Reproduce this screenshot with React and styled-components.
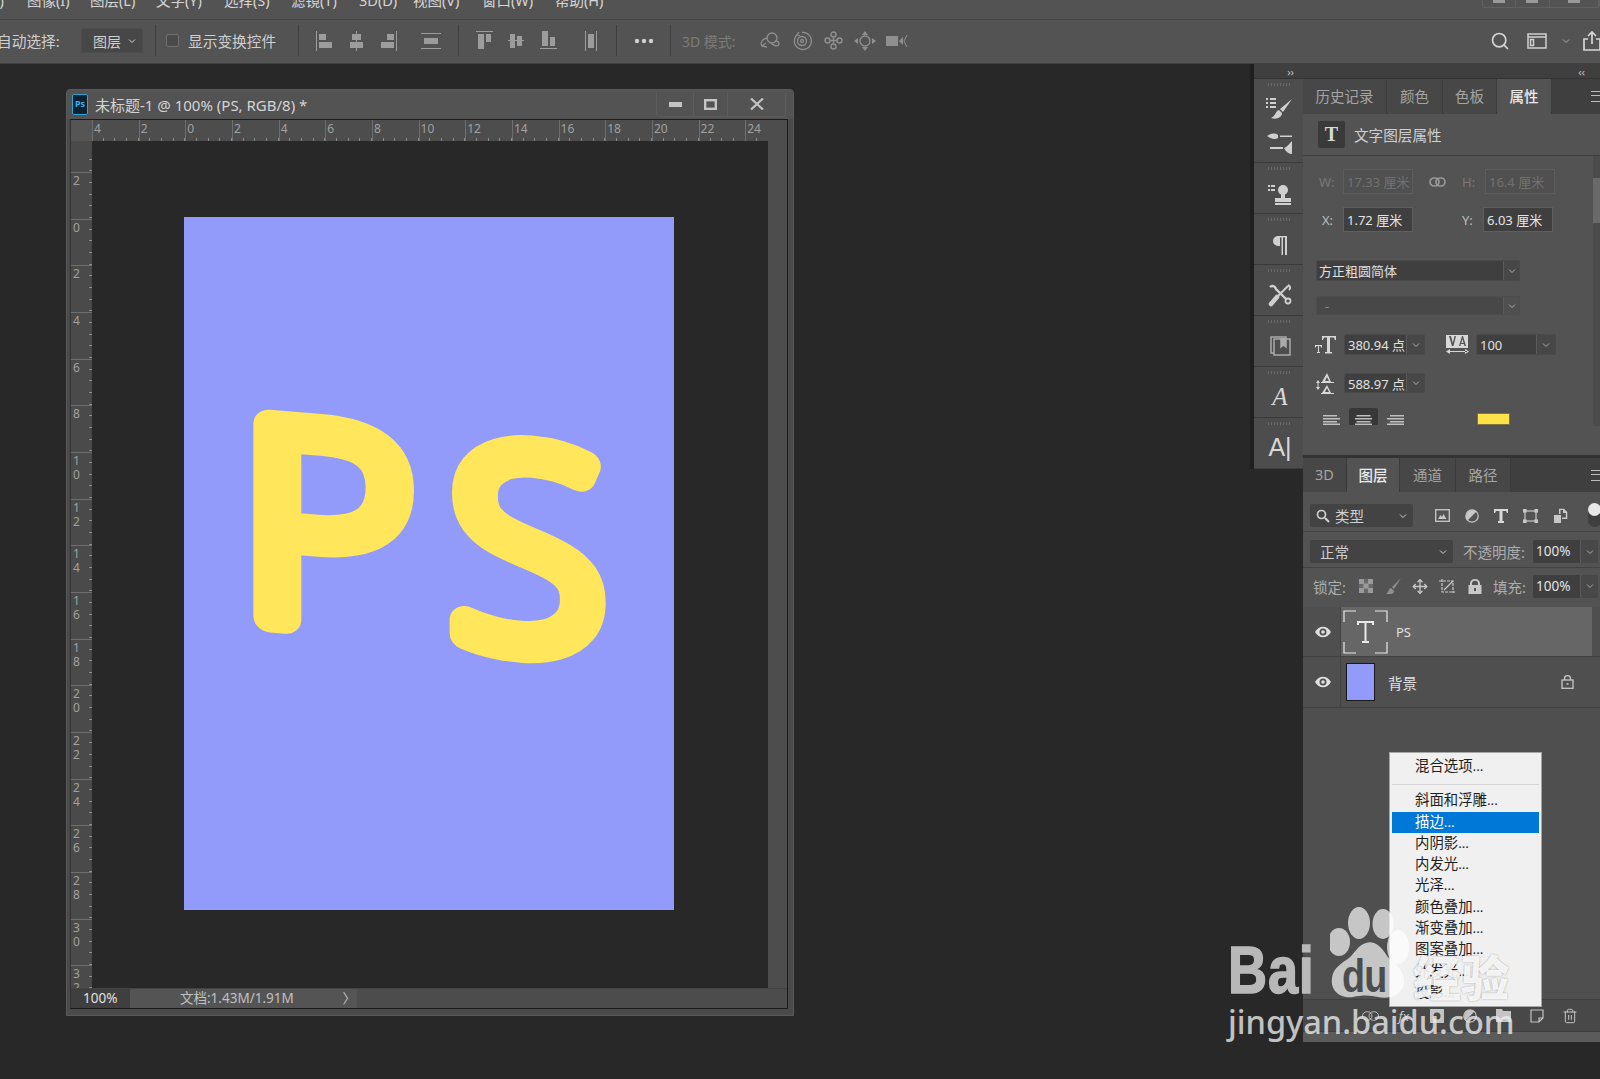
import React from 'react';
import styled, { createGlobalStyle } from 'styled-components';
import { Search, Trash2, Move } from 'lucide-react';

const FONT = '"Noto Sans", "Noto Sans CJK SC", sans-serif';

const GlobalStyle = createGlobalStyle`
  html, body { margin: 0; padding: 0; background: #282828; }
  body { font-family: ${FONT}; overflow: hidden; }
  #root { width: 1600px; height: 1079px; }
`;

const Page = styled.div`
  position: relative;
  width: 1600px;
  height: 1079px;
  overflow: hidden;
  display: flex;
  flex-direction: column;
  background: #282828;
  color: #c8c8c8;
  font-size: 14px;
`;

/* ---------- top bars ---------- */
const MenuBar = styled.div`
  height: 19px;
  flex: none;
  display: flex;
  overflow: hidden;
  background: #535353;
  border-bottom: 1px solid #434343;
  box-sizing: content-box;
`;
const MenuItem = styled.span`
  flex: none;
  margin-left: ${(p) => p.$ml}px;
  width: ${(p) => p.$w}px;
  margin-top: -10px;
  line-height: 20px;
  font-size: 14.5px;
  white-space: nowrap;
  color: #d6d6d6;
`;
const WinButtons = styled.div`
  margin-left: auto;
  display: flex;
  height: 7px;
  width: 116px;
  border: 1px solid #606060;
  border-top: 0;
  border-radius: 0 0 3px 3px;
`;
const WinButton = styled.div`
  flex: ${(p) => p.$flex || 1};
  border-right: 1px solid #606060;
  display: flex;
  justify-content: center;
  &::before { content: ''; width: 12px; height: 3px; background: #999; }
`;

const OptionsBar = styled.div`
  height: 44px;
  box-sizing: border-box;
  padding-bottom: 2px;
  flex: none;
  display: flex;
  align-items: center;
  background: #535353;
  border-bottom: 1px solid #3e3e3e;
`;
const OptLabel = styled.span`
  flex: none;
  margin-left: ${(p) => p.$ml || 0}px;
  width: ${(p) => p.$w}px;
  font-size: ${(p) => (p.$dim ? 14 : 14.7)}px;
  white-space: nowrap;
  color: ${(p) => (p.$dim ? '#7b7b7b' : '#cfcfcf')};
`;
const Drop = styled.div`
  flex: none;
  margin-left: ${(p) => p.$ml}px;
  width: ${(p) => p.$w}px;
  height: 25px;
  box-sizing: border-box;
  display: flex;
  align-items: center;
  justify-content: space-between;
  padding: 0 6px 0 11px;
  background: #474747;
  border: 1px solid #4d4d4d;
  border-radius: 2px;
  color: #cfcfcf;
`;
const Sep = styled.div`
  flex: none;
  margin-left: ${(p) => p.$ml}px;
  width: 1px;
  height: 31px;
  background: #3f3f3f;
`;
const Check = styled.div`
  flex: none;
  margin-left: ${(p) => p.$ml}px;
  width: 13px;
  height: 13px;
  box-sizing: border-box;
  background: #4a4a4a;
  border: 1px solid #6f6f6f;
  border-radius: 2px;
`;
const ToolIcon = styled.div`
  flex: none;
  margin-left: ${(p) => p.$ml}px;
  display: flex;
  color: ${(p) => p.$color || '#9c9c9c'};
`;

/* ---------- workspace ---------- */
const Workspace = styled.div`
  flex: 1;
  position: relative;
  display: flex;
  align-items: flex-start;
  background: #282828;
`;

const DocWindow = styled.div`
  margin: 25px 0 0 66px;
  width: 728px;
  height: 927px;
  box-sizing: border-box;
  background: #4a4a4a;
  border: 1px solid #5a5a5a;
  border-radius: 4px 4px 0 0;
  display: flex;
  flex-direction: column;
  padding: 0 5px 6px 3px;
`;
const TitleBar = styled.div`
  height: 29px;
  flex: none;
  display: flex;
  align-items: center;
  margin: 0 -5px 0 -3px;
  padding-left: 5px;
  background: #535353;
  color: #d4d4d4;
`;
const TitleText = styled.span`
  margin-left: 7px;
  font-size: 15px;
  white-space: nowrap;
`;
const PsBadge = styled.div`
  width: 16px;
  height: 21px;
  box-sizing: border-box;
  background: #0b2233;
  border: 1.5px solid #2fa3d6;
  border-radius: 2px;
  color: #3fb0e6;
  font-size: 9px;
  font-weight: 700;
  line-height: 18px;
  text-align: center;
`;
const WinControls = styled.div`
  margin-left: auto;
  margin-right: 7px;
  height: 24px;
  display: flex;
  border: 1px solid #5c5c5c;
  border-top: 0;
  border-radius: 0 0 3px 3px;
`;
const WinControl = styled.div`
  width: ${(p) => p.$w}px;
  display: flex;
  align-items: center;
  justify-content: center;
  border-left: ${(p) => (p.$first ? '0' : '1px solid #5c5c5c')};
  color: #c4c4c4;
`;
const DocInner = styled.div`
  flex: 1;
  display: flex;
  flex-direction: column;
  border: 1px solid #1c1c1c;
  border-left-color: #333;
  min-height: 0;
`;
const RulerTop = styled.div`
  height: 21px;
  flex: none;
  display: flex;
  background: #4d4d4d;
`;
const Corner = styled.div`
  width: 21px;
  flex: none;
  background: #555;
`;
const HTicks = styled.div`
  width: 676px;
  flex: none;
  display: flex;
  overflow: hidden;
  background-image: repeating-linear-gradient(90deg, transparent 0 10.67px, #8a8a8a 10.67px 11.67px);
  background-size: 100% 3px;
  background-repeat: no-repeat;
  background-position: 0 100%;
`;
const HCell = styled.div`
  flex: none;
  width: 46.67px;
  box-sizing: border-box;
  border-left: 1px solid #6e6e6e;
  padding-left: 1px;
  font-size: 12px;
  line-height: 18px;
  color: #a0a0a0;
`;
const ScrollStrip = styled.div`
  flex: 1;
  background: #4d4d4d;
`;
const MiddleRow = styled.div`
  flex: 1;
  display: flex;
  min-height: 0;
`;
const RulerLeft = styled.div`
  width: 21px;
  flex: none;
  overflow: hidden;
  background-color: #4a4a4a;
  background-image: repeating-linear-gradient(180deg, transparent 0 10.67px, #8a8a8a 10.67px 11.67px);
  background-size: 3px 100%;
  background-repeat: no-repeat;
  background-position: 100% 7px;
`;
const VLead = styled.div`
  height: 31px;
`;
const VCell = styled.div`
  height: 46.67px;
  box-sizing: border-box;
  border-top: 1px solid #6e6e6e;
  padding: 1px 0 0 2px;
  font-size: 12px;
  line-height: 14px;
  color: #a0a0a0;
  display: flex;
  flex-direction: column;
`;
const CanvasArea = styled.div`
  width: 676px;
  flex: none;
  background: #282828;
  overflow: hidden;
`;
const Artboard = styled.div`
  position: relative;
  margin: 76px 0 0 92px;
  width: 490px;
  height: 693px;
  background: #929bfa;
`;
const ArtText = styled.svg`
  position: absolute;
  inset: 0;
  width: 490px;
  height: 693px;
  overflow: visible;
`;
const SideStrip = styled.div`
  flex: 1;
  background: #4d4d4d;
`;
const StatusBar = styled.div`
  height: 19px;
  flex: none;
  display: flex;
  background: #4c4c4c;
  border-top: 1px solid #444;
  line-height: 18px;
`;
const Zoom = styled.div`
  width: 59px;
  box-sizing: border-box;
  padding-left: 12px;
  background: #3f3f3f;
  color: #e0e0e0;
  font-size: 13.5px;
`;
const DocInfo = styled.div`
  width: 227px;
  box-sizing: border-box;
  padding: 0 1px 0 50px;
  display: flex;
  justify-content: space-between;
  background: #545454;
  color: #c0c0c0;
  font-size: 13.5px;
`;

/* ---------- right side ---------- */
const DockColumn = styled.div`
  margin-left: auto;
  width: 49px;
  flex: none;
  box-shadow: -4px 0 0 #1f1f1f;
  background: #4d4d4d;
`;
const Strip = styled.div`
  height: 15px;
  box-sizing: border-box;
  display: flex;
  align-items: center;
  justify-content: ${(p) => p.$justify || 'flex-end'};
  padding: 0 ${(p) => p.$pad || 8}px;
  background: #3f3f3f;
  border-bottom: 1px solid #333;
  color: #c0c0c0;
  font-size: 11px;
  line-height: 1;
`;
const DockCell = styled.div`
  height: ${(p) => p.$h || 51}px;
  box-sizing: border-box;
  display: flex;
  flex-direction: column;
  align-items: center;
  border-bottom: 1px solid #3b3b3b;
  color: #d0d0d0;
  padding: 4px 0 0 3px;
  gap: ${(p) => p.$gap || 0}px;
  &::before {
    content: '';
    width: 24px;
    height: 3px;
    flex: none;
    margin-bottom: ${(p) => p.$top || 6}px;
    background: repeating-linear-gradient(90deg, #6a6a6a 0 1px, transparent 1px 3px);
  }
`;
const DockLetter = styled.span`
  font-size: 25px;
  line-height: 30px;
  color: #d8d8d8;
  font-family: ${(p) => (p.$serif ? '"Liberation Serif", serif' : '"Liberation Sans", sans-serif')};
  font-style: ${(p) => (p.$serif ? 'italic' : 'normal')};
`;

const PanelColumn = styled.div`
  position: relative;
  width: 297px;
  flex: none;
  height: 978px;
  background: #535353;
  display: flex;
  flex-direction: column;
`;
const Tabs = styled.div`
  height: ${(p) => p.$h}px;
  flex: none;
  display: flex;
  align-items: stretch;
  background: #3f3f3f;
  position: relative;
`;
const Tab = styled.div`
  width: ${(p) => p.$w}px;
  flex: none;
  box-sizing: border-box;
  display: flex;
  align-items: center;
  justify-content: center;
  padding-bottom: 2px;
  font-size: 14.5px;
  background: ${(p) => (p.$active ? '#535353' : '#474747')};
  color: ${(p) => (p.$active ? '#eaeaea' : '#a4a4a4')};
  font-weight: ${(p) => (p.$active ? 500 : 400)};
  border-right: 1px solid #3b3b3b;
`;
const PanelMenu = styled.div`
  margin-left: auto;
  width: 9px;
  height: 9px;
  align-self: center;
  border-top: 1px solid #bbb;
  border-bottom: 1px solid #bbb;
  position: relative;
  &::after {
    content: '';
    position: absolute;
    left: 0;
    right: 0;
    top: 3px;
    height: 1px;
    background: #bbb;
  }
`;
const PropsHeader = styled.div`
  height: 42px;
  flex: none;
  box-sizing: border-box;
  display: flex;
  align-items: center;
  padding-left: 15px;
  border-bottom: 1px solid #3f3f3f;
  color: #cfcfcf;
  font-size: 14.6px;
`;
const TypeBox = styled.div`
  width: 27px;
  height: 27px;
  margin-right: 9px;
  background: #3a3a3a;
  border-radius: 2px;
  color: #d8d8d8;
  font: 700 20px/26px "Liberation Serif", serif;
  text-align: center;
`;
const PropsBody = styled.div`
  flex: none;
  height: 299px;
  display: flex;
  border-bottom: 3px solid #333;
`;
const PropsContent = styled.div`
  flex: 1;
  display: flex;
  flex-direction: column;
  padding-left: 13px;
`;
const ScrollTrack = styled.div`
  width: 7px;
  height: 270px;
  flex: none;
  background: #4c4c4c;
  padding-top: 22px;
  box-sizing: border-box;
  &::before {
    content: '';
    display: block;
    height: 45px;
    background: #6a6a6a;
  }
`;
const PropRow = styled.div`
  flex: none;
  display: flex;
  align-items: center;
  margin-top: ${(p) => p.$mt}px;
  height: ${(p) => p.$h}px;
`;
const FieldLabel = styled.span`
  flex: none;
  width: ${(p) => p.$w}px;
  margin-left: ${(p) => p.$ml || 0}px;
  color: ${(p) => (p.$dim ? '#777' : '#bdbdbd')};
  font-size: 13px;
  white-space: nowrap;
`;
const Field = styled.div`
  flex: none;
  width: ${(p) => p.$w}px;
  margin-left: ${(p) => p.$ml || 0}px;
  height: 100%;
  box-sizing: border-box;
  padding-left: ${(p) => p.$pad || 3}px;
  display: flex;
  align-items: center;
  background: ${(p) => (p.$dim ? '#505050' : '#3f3f3f')};
  border: 1px solid ${(p) => (p.$dim ? '#5d5d5d' : '#5f5f5f')};
  color: ${(p) => (p.$dim ? '#707070' : '#e4e4e4')};
  font-size: 13px;
  white-space: nowrap;
`;
const Combo = styled.div`
  flex: none;
  width: ${(p) => p.$w}px;
  margin-left: ${(p) => p.$ml || 0}px;
  height: 100%;
  box-sizing: border-box;
  display: flex;
  border-radius: 2px;
  overflow: hidden;
  background: ${(p) => (p.$dim ? '#484848' : '#3f3f3f')};
  border: 1px solid ${(p) => (p.$dim ? '#4c4c4c' : '#4a4a4a')};
  color: ${(p) => (p.$dim ? '#8a8a8a' : '#e0e0e0')};
  font-size: 13px;
`;
const ComboText = styled.div`
  flex: 1;
  min-width: 0;
  overflow: hidden;
  white-space: nowrap;
  padding-left: ${(p) => p.$pad || 3}px;
  display: flex;
  align-items: center;
`;
const ComboArrow = styled.div`
  flex: none;
  width: ${(p) => p.$w || 17}px;
  display: flex;
  align-items: center;
  justify-content: center;
  background: ${(p) => (p.$dim ? '#4f4f4f' : '#474747')};
  border-left: 1px solid #5a5a5a;
  color: #aaa;
`;
const IconSlot = styled.div`
  flex: none;
  width: ${(p) => p.$w}px;
  margin-left: ${(p) => p.$ml || 0}px;
  display: flex;
  justify-content: center;
  align-items: center;
  color: ${(p) => p.$color || '#c8c8c8'};
`;
const AlignBtn = styled.div`
  flex: none;
  width: ${(p) => p.$w}px;
  margin-left: ${(p) => p.$ml || 0}px;
  height: 100%;
  display: flex;
  align-items: flex-end;
  justify-content: center;
  color: #c0c0c0;
  background: ${(p) => (p.$active ? '#383838' : 'transparent')};
  border-radius: 2px 2px 0 0;
`;
const Swatch = styled.div`
  flex: none;
  margin: 5px 0 0 73px;
  width: 33px;
  height: 12px;
  background: #fde24a;
  border: 1px solid #7c7442;
  box-sizing: border-box;
`;

const LayersPanel = styled.div`
  flex: 1;
  display: flex;
  flex-direction: column;
  background: #4f4f4f;
  min-height: 0;
`;
const FilterRow = styled.div`
  height: 40px;
  flex: none;
  box-sizing: border-box;
  display: flex;
  align-items: center;
  padding: 8px 0 0 7px;
  background: #535353;
  border-bottom: 1px solid #424242;
  overflow: hidden;
`;
const LayerDrop = styled.div`
  flex: none;
  width: ${(p) => p.$w}px;
  height: ${(p) => p.$h || 23}px;
  box-sizing: border-box;
  display: flex;
  align-items: center;
  padding: 0 6px 0 ${(p) => p.$pad || 6}px;
  gap: 5px;
  background: #434343;
  border-radius: 2px;
  color: #cfcfcf;
  font-size: 14.5px;
  & > :last-child { margin-left: auto; }
`;
const ToggleKnob = styled.div`
  flex: none;
  margin-left: 20px;
  width: 14px;
  height: 22px;
  border-radius: 7px;
  background: #3f3f3f;
  position: relative;
  &::before {
    content: '';
    position: absolute;
    left: 0;
    top: -2px;
    width: 13px;
    height: 13px;
    border-radius: 50%;
    background: #e8e8e8;
  }
`;
const BlendRow = styled.div`
  height: ${(p) => p.$h}px;
  flex: none;
  box-sizing: border-box;
  display: flex;
  align-items: center;
  padding: ${(p) => p.$top || 0}px 0 ${(p) => p.$bot || 0}px ${(p) => p.$pad || 7}px;
  background: #535353;
  border-bottom: ${(p) => (p.$flat ? '0' : '1px solid #424242')};
  overflow: hidden;
`;
const Muted = styled.span`
  flex: none;
  width: ${(p) => p.$w}px;
  margin-left: ${(p) => p.$ml || 0}px;
  color: #adadad;
  font-size: 14.5px;
  white-space: nowrap;
`;
const PercentBox = styled.div`
  flex: none;
  margin-left: ${(p) => p.$ml || 0}px;
  width: 65px;
  height: 23px;
  display: flex;
  border-radius: 2px;
  overflow: hidden;
  background: #3f3f3f;
  color: #e2e2e2;
  font-size: 13.5px;
`;
const PercentValue = styled.div`
  width: 47px;
  box-sizing: border-box;
  padding-left: 3px;
  line-height: 22px;
`;
const PercentArrow = styled.div`
  flex: 1;
  display: flex;
  align-items: center;
  justify-content: center;
  background: #484848;
  border-left: 1px solid #5a5a5a;
  color: #aaa;
`;
const LayerRow = styled.div`
  height: ${(p) => p.$h}px;
  box-sizing: border-box;
  flex: none;
  display: flex;
  align-items: stretch;
  background: #4f4f4f;
  border-bottom: 1px solid #424242;
`;
const EyeCol = styled.div`
  width: 38px;
  flex: none;
  box-sizing: border-box;
  padding-left: 2px;
  display: flex;
  align-items: center;
  justify-content: center;
  border-right: 1px solid #424242;
  color: #e0e0e0;
`;
const LayerBody = styled.div`
  width: 251px;
  flex: none;
  box-sizing: border-box;
  display: flex;
  align-items: center;
  background: ${(p) => (p.$selected ? '#666' : '#4f4f4f')};
  color: #e0e0e0;
  font-size: ${(p) => (p.$selected ? 13 : 14.5)}px;
`;
const TypeThumb = styled.div`
  width: 45px;
  height: 44px;
  margin: 0 8px 0 2px;
  flex: none;
  color: #e8e8e8;
`;
const BlueThumb = styled.div`
  width: 29px;
  height: 38px;
  flex: none;
  margin: 0 13px 0 5px;
  box-sizing: border-box;
  background: #929bfa;
  border: 1px solid #1a1a1a;
`;
const LayerName = styled.span`
  flex: 1;
`;
const LockSlot = styled.div`
  flex: none;
  margin-right: 18px;
  display: flex;
  color: #c8c8c8;
`;
const LayerSpacer = styled.div`
  flex: 1;
`;
const LayerActions = styled.div`
  height: 32px;
  flex: none;
  display: flex;
  align-items: center;
  background: #484848;
  border-top: 1px solid #404040;
  box-sizing: border-box;
  padding-left: 59px;
  gap: 16.3px;
  color: #c4c4c4;
`;
const ActionBox = styled.div`
  flex: none;
  width: 17px;
  display: flex;
  justify-content: center;
  font-size: 13px;
  font-style: italic;
`;
const BottomGrip = styled.div`
  height: 10px;
  flex: none;
  background: #5b5b5b;
  border-top: 1px solid #3f3f3f;
`;

const StyleMenu = styled.div`
  position: absolute;
  left: 86px;
  top: 688px;
  width: 153px;
  height: 255px;
  box-sizing: border-box;
  padding: 3px 2px 0;
  background: #f0f0f0;
  border: 1px solid #a6a6a6;
  color: #1e1e1e;
  font-family: "Liberation Serif", "Noto Sans CJK SC", serif;
  font-size: 14.4px;
`;
const StyleItem = styled.div`
  height: 21.3px;
  line-height: 21px;
  padding-left: 23px;
  background: ${(p) => (p.$active ? '#0078d7' : 'transparent')};
  color: ${(p) => (p.$active ? '#fff' : '#1e1e1e')};
  white-space: nowrap;
`;
const StyleDivider = styled.div`
  height: 1px;
  margin: 7px 0 5px;
  background: #d5d5d5;
`;

/* ---------- watermark ---------- */
const Watermark = styled.div`
  position: absolute;
  left: 1228px;
  top: 905px;
  width: 300px;
  display: flex;
  flex-direction: column;
  pointer-events: none;
`;
const MarkTop = styled.div`
  display: flex;
  align-items: flex-end;
  height: 94px;
`;
const MarkBaiBox = styled.div`
  width: 82px;
  flex: none;
  margin-bottom: -4px;
`;
const MarkBai = styled.span`
  display: inline-block;
  font: 700 66px/66px "Liberation Sans", sans-serif;
  letter-spacing: 1px;
  color: #b8b8b8;
  -webkit-text-stroke: 1.5px #b8b8b8;
  transform: scaleX(0.82);
  transform-origin: 0 50%;
`;
const Paw = styled.div`
  position: relative;
  width: 82px;
  height: 94px;
  margin-left: 20px;
  flex: none;
`;
const MarkDu = styled.span`
  position: absolute;
  left: 12px;
  top: 48px;
  font: 700 46px/46px "Liberation Sans", sans-serif;
  letter-spacing: -1px;
  color: #4c4c4c;
  transform: scaleX(0.82);
  transform-origin: 0 50%;
`;
const MarkCn = styled.span`
  margin: 0 0 -2px 1px;
  font: 900 48px/52px "Noto Sans CJK SC", sans-serif;
  color: rgba(255, 255, 255, 0.9);
  text-shadow: 0 0 2px rgba(0, 0, 0, 0.35);
  white-space: nowrap;
`;
const MarkDomain = styled.span`
  font: 500 32.5px/46px "Noto Sans", sans-serif;
  color: rgba(236, 236, 236, 0.8);
  white-space: nowrap;
`;

/* ---------- icons ---------- */
const Svg = ({ w, h, vb, children }) => (
  <svg width={w} height={h} viewBox={vb || `0 0 ${w} ${h}`} fill="currentColor">{children}</svg>
);
const Chevron = ({ size = 8 }) => (
  <svg width={size} height={size} viewBox="0 0 8 8" fill="none" stroke="currentColor" strokeWidth="1">
    <path d="M1 2.5 4 5.5 7 2.5" />
  </svg>
);
const AlignLeft = () => <Svg w={17} h={20}><rect x="0" width="1" height="20" /><rect x="3" y="3" width="7" height="6" /><rect x="3" y="11" width="13" height="6" /></Svg>;
const AlignCenter = () => <Svg w={15} h={20}><rect x="7" width="1" height="20" /><rect x="3" y="3" width="9" height="6" /><rect x="1" y="11" width="13" height="6" /></Svg>;
const AlignRight = () => <Svg w={17} h={20}><rect x="16" width="1" height="20" /><rect x="7" y="3" width="7" height="6" /><rect x="1" y="11" width="13" height="6" /></Svg>;
const DistH = () => <Svg w={20} h={16}><rect width="20" height="1" /><rect x="3" y="5" width="14" height="6" /><rect y="15" width="20" height="1" /></Svg>;
const AlignTop = () => <Svg w={17} h={20}><rect width="17" height="1" /><rect x="2" y="3" width="6" height="15" /><rect x="10" y="3" width="5" height="8" /></Svg>;
const AlignMid = () => <Svg w={16} h={14}><rect y="6" width="16" height="1" /><rect x="2" width="5" height="14" /><rect x="9" y="2" width="5" height="10" /></Svg>;
const AlignBottom = () => <Svg w={17} h={20}><rect y="17" width="17" height="1" /><rect x="2" width="6" height="15" /><rect x="10" y="6" width="5" height="9" /></Svg>;
const DistV = () => <Svg w={12} h={20}><rect width="1" height="20" /><rect x="3" y="3" width="6" height="14" /><rect x="11" width="1" height="20" /></Svg>;
const Dots = () => <Svg w={20} h={6}><circle cx="3" cy="3" r="2.2" /><circle cx="10" cy="3" r="2.2" /><circle cx="17" cy="3" r="2.2" /></Svg>;

const Orbit3D = () => (
  <svg width="22" height="20" viewBox="0 0 22 20" fill="none" stroke="currentColor" strokeWidth="1.3">
    <circle cx="13" cy="7" r="5" /><path d="M8 7C3 8 1 12 3 15l4-3M3 15l5 1M12 12c3 3 7 4 8 1 0-2-2-3-4-3" />
  </svg>
);
const Roll3D = () => (
  <svg width="20" height="20" viewBox="0 0 20 20" fill="none" stroke="currentColor" strokeWidth="1.3">
    <path d="M6 3A8.5 8.5 0 1 0 10 1.500" /><circle cx="10" cy="10" r="4.500" /><circle cx="10" cy="10" r="1.500" /><path d="M7 1l-2 3 3 1" />
  </svg>
);
const Pan3D = () => (
  <svg width="19" height="19" viewBox="0 0 19 19" fill="none" stroke="currentColor" strokeWidth="1.4">
    <circle cx="9.500" cy="3.500" r="2.500" /><circle cx="9.500" cy="15.500" r="2.500" /><circle cx="3.500" cy="9.500" r="2.500" /><circle cx="15.500" cy="9.500" r="2.500" /><path d="M9.500 6v7M6 9.500h7" />
  </svg>
);
const Slide3D = () => (
  <svg width="22" height="20" viewBox="0 0 22 20" fill="currentColor">
    <circle cx="11" cy="10" r="5" fill="none" stroke="currentColor" strokeWidth="1.4" />
    <path d="M11 0l3 4H8zM11 20l-3-4h6zM0 10l4-3v6zM22 10l-4 3V7z" />
  </svg>
);
const Camera3D = () => (
  <svg width="23" height="14" viewBox="0 0 23 14" fill="currentColor">
    <rect y="2" width="12" height="10" /><path d="M13 7l4-4v8z" /><path d="M21 1l-3 6 3 6" fill="none" stroke="currentColor" />
  </svg>
);
const Workspaces = () => (
  <svg width="20" height="16" viewBox="0 0 20 16" fill="none" stroke="currentColor" strokeWidth="1.500">
    <rect x="1" y="1" width="18" height="14" /><path d="M1 4h18" /><rect x="3.500" y="6.500" width="3" height="6" />
  </svg>
);
const Share = () => (
  <svg width="18" height="20" viewBox="0 0 18 20" fill="none" stroke="currentColor" strokeWidth="1.700">
    <path d="M5 8H1v11h16V8h-4M9 13V2M5 5l4-4 4 4" />
  </svg>
);
const Brush = () => (
  <svg width="28" height="26" viewBox="0 0 28 26" fill="currentColor">
    <path d="M26 2 14 12l3 3zM13 13c-4 1-3 6-8 8 6 2 11-1 11-5z" />
    <rect x="0" y="1" width="2" height="2" /><rect x="4" y="1" width="6" height="2" /><rect x="0" y="5" width="2" height="2" /><rect x="4" y="5" width="6" height="2" /><rect x="0" y="9" width="2" height="2" /><rect x="4" y="9" width="6" height="2" />
  </svg>
);
const BrushPresets = () => (
  <svg width="27" height="22" viewBox="0 0 27 22" fill="currentColor">
    <path d="M0 3c4-3 8-3 11-1v3C8 7 4 6 0 3zM13 2.500h12V4H13zM3 14h13v2H3zM17 15c3-1 5-4 8-7v13c-3 0-6-2-8-6z" />
  </svg>
);
const Stamp = () => (
  <svg width="24" height="22" viewBox="0 0 24 22" fill="currentColor">
    <circle cx="15" cy="6" r="5" /><path d="M13 10h4v4h6v4H7v-4h6z" /><rect x="7" y="19" width="16" height="2" />
    <rect y="1" width="2" height="2" /><rect x="3" y="1" width="4" height="2" /><rect y="5" width="2" height="2" /><rect x="3" y="5" width="4" height="2" />
  </svg>
);
const Pilcrow = () => (
  <svg width="14" height="19" viewBox="0 0 14 19" fill="currentColor">
    <path d="M7 0H5a5 5 0 0 0 0 10h2zM8.500 0h1.500v19H8.500zM12 0h2v19h-2zM7 0h6v1.500H7z" />
  </svg>
);
const Tools = () => (
  <svg width="24" height="24" viewBox="0 0 24 24" fill="none" stroke="currentColor">
    <path d="M20 3 9 14" strokeWidth="2" /><path d="M20 2c2 1 3 3 1 5" strokeWidth="2" /><path d="M9 14 3 21" strokeWidth="4.500" strokeLinecap="round" />
    <path d="M2 4c2-2 5-1 6 2l10 10" strokeWidth="2.400" /><circle cx="20" cy="18" r="2.500" strokeWidth="1.800" />
  </svg>
);
const Copies = () => (
  <svg width="21" height="20" viewBox="0 0 21 20" fill="none" stroke="currentColor" strokeWidth="1.500" color="#aaa">
    <rect x="4" y="3" width="16" height="16" /><path d="M4 17H1V1h15v2" /><path d="M11 3h5v8l-2.500-2-2.500 2z" fill="currentColor" />
  </svg>
);
const Link = () => (
  <svg width="17" height="10" viewBox="0 0 17 10" fill="none" stroke="currentColor" strokeWidth="1.700">
    <rect x="1" y="1" width="9" height="8" rx="4" /><rect x="7" y="1" width="9" height="8" rx="4" />
  </svg>
);
const SizeIcon = () => (
  <svg width="21" height="19" viewBox="0 0 21 19" fill="currentColor">
    <path d="M7 1h14v4h-1.200L19 2.500h-4V17h2v1.500H10V17h2V2.500H9L8 5H7zM0 10h7v2.500H6L5.500 11H4v6h1v1H2v-1h1v-6H1.500L1 12.500H0z" />
  </svg>
);
const KerningIcon = () => (
  <svg width="23" height="20" viewBox="0 0 23 20" fill="currentColor">
    <rect width="22" height="13" />
    <path d="M3 1l3 10h1.500L10 1H8.500L6.800 8 5 1zM13 11l3-10h1l3 10h-1.500l-.6-2h-3l-.6 2zM15.300 8h2.200l-1-4z" fill="#535353" />
    <path d="M2 16h19v1H2zM0 16.500 4 14v5zM23 16.500 19 14v5z" />
  </svg>
);
const LeadingIcon = () => (
  <svg width="20" height="21" viewBox="0 0 20 21" fill="currentColor">
    <path d="M11 0l4 9H6zM11 4 9 8h4zM11 12l4 8H6zM11 15l-2 4h4z" fillRule="evenodd" />
    <path d="M5 9h13v1H5zM5 20h13v1H5zM2 7 0 10h1.500v4H0l2 3 2-3H2.500v-4H4z" />
  </svg>
);
const TextLeft = () => <Svg w={17} h={10}><rect width="14" height="1.500" /><rect y="3" width="17" height="1.500" /><rect y="6" width="14" height="1.500" /><rect y="8.500" width="17" height="1.500" /></Svg>;
const TextMid = () => <Svg w={17} h={10}><rect x="1.500" width="14" height="1.500" /><rect y="3" width="17" height="1.500" /><rect x="1.500" y="6" width="14" height="1.500" /><rect y="8.500" width="17" height="1.500" /></Svg>;
const TextRight = () => <Svg w={17} h={10}><rect x="3" width="14" height="1.500" /><rect y="3" width="17" height="1.500" /><rect x="3" y="6" width="14" height="1.500" /><rect y="8.500" width="17" height="1.500" /></Svg>;
const MagSmall = () => (
  <svg width="14" height="14" viewBox="0 0 14 14" fill="none" stroke="currentColor" strokeWidth="1.700">
    <circle cx="5.500" cy="5.500" r="4" /><path d="M9 9l4 4" strokeWidth="2.200" />
  </svg>
);
const ImageFilter = () => (
  <svg width="15" height="13" viewBox="0 0 15 13" fill="none" stroke="currentColor" strokeWidth="1.300">
    <rect x=".7" y=".7" width="13.600" height="11.600" /><path d="M3 10l2.500-4L7 8l1.500-3 3 5z" fill="currentColor" stroke="none" />
  </svg>
);
const AdjustFilter = () => (
  <svg width="14" height="14" viewBox="0 0 14 14" fill="currentColor">
    <circle cx="7" cy="7" r="6.200" fill="none" stroke="currentColor" strokeWidth="1.200" /><path d="M2.500 11.500 11.500 2.500A6.400 6.400 0 0 0 2.500 11.500z" />
  </svg>
);
const ShapeFilter = () => (
  <svg width="15" height="14" viewBox="0 0 15 14" fill="none" stroke="currentColor" strokeWidth="1.200">
    <rect x="2" y="2" width="11" height="10" /><g fill="currentColor"><rect x="0" y="0" width="3" height="3" /><rect x="12" y="0" width="3" height="3" /><rect x="0" y="11" width="3" height="3" /><rect x="12" y="11" width="3" height="3" /></g>
  </svg>
);
const SmartFilter = () => (
  <svg width="14" height="15" viewBox="0 0 14 15" fill="currentColor">
    <path d="M0 7h7v8H0z" /><path d="M5 .7h5l3.300 3.300v7H8V9.500h3.800V5H9V2H6.500v4H5z" />
  </svg>
);
const Checker = () => (
  <svg width="14" height="14" viewBox="0 0 14 14" fill="#9a9a9a">
    <rect width="14" height="14" fill="#6a6a6a" /><rect width="5" height="5" /><rect x="9" width="5" height="5" /><rect x="4.500" y="4.500" width="5" height="5" /><rect y="9" width="5" height="5" /><rect x="9" y="9" width="5" height="5" />
  </svg>
);
const LockBrush = () => (
  <svg width="16" height="16" viewBox="0 0 16 16" fill="#8f8f8f"><path d="M15 0 6 9l2 2zM5 10c-3 1-2 4-5 6 4 1 8 0 8-3z" /></svg>
);
const CropLock = () => (
  <svg width="17" height="15" viewBox="0 0 17 15" fill="none" stroke="currentColor" strokeWidth="1.200">
    <path d="M3 0v13h13M0 2h14v12" strokeDasharray="3 1" /><path d="M5 11 14 2" />
  </svg>
);
const LockFill = () => (
  <svg width="14" height="15" viewBox="0 0 14 15" fill="currentColor">
    <path d="M2 6V4.500a5 4.500 0 0 1 10 0V6h1.500v9H.5V6zM4 6h6V4.500a3 2.800 0 0 0-6 0zM6 9v3h2V9z" fillRule="evenodd" />
  </svg>
);
const LockLine = () => (
  <svg width="13" height="14" viewBox="0 0 13 14" fill="none" stroke="currentColor" strokeWidth="1.300">
    <rect x="1" y="5" width="11" height="8.300" /><path d="M3.500 5V3.500a3 2.800 0 0 1 6 0V5M5.500 9h2" />
  </svg>
);
const EyeIcon = () => (
  <svg width="16" height="12" viewBox="0 0 16 12" fill="currentColor">
    <path d="M0 6c4-7 12-7 16 0-4 7-12 7-16 0zM8 2.500a3.500 3.500 0 1 0 0 7 3.500 3.500 0 0 0 0-7z" fillRule="evenodd" /><circle cx="8" cy="6" r="1.800" />
  </svg>
);
const TypeFrame = () => (
  <svg width="45" height="44" viewBox="0 0 45 44" fill="none" stroke="currentColor" strokeWidth="1.200">
    <path d="M1 12V1h12M32 1h12v11M1 32v11h12M32 43h12V32" />
    <path d="M15 15V12h15v3M22.500 12v20M19 32h7" strokeWidth="2" />
  </svg>
);
const LinkAct = () => (
  <svg width="18" height="10" viewBox="0 0 18 10" fill="none" stroke="currentColor" strokeWidth="1"><rect x=".5" y=".5" width="10" height="9" rx="4.500" /><rect x="7.500" y=".5" width="10" height="9" rx="4.500" /></svg>
);
const MaskAct = () => <Svg w={14} h={14}><path d="M0 0h14v14H0zM7 3.500a3.500 3.500 0 1 0 0 7 3.500 3.500 0 0 0 0-7z" fillRule="evenodd" /></Svg>;
const AdjAct = () => <AdjustFilter />;
const FolderAct = () => <Svg w={15} h={13}><path d="M0 0h6l1 2h8v11H0z" /></Svg>;
const NewAct = () => (
  <svg width="14" height="14" viewBox="0 0 14 14" fill="none" stroke="currentColor" strokeWidth="1.200"><path d="M1 1h12v8l-4 4H1zM13 9H9v4" /></svg>
);
const PawArt = () => (
  <svg width="82" height="94" viewBox="0 0 82 94" fill="rgba(255,255,255,.68)">
    <ellipse cx="29" cy="18" rx="11" ry="16" />
    <ellipse cx="53" cy="19" rx="10.500" ry="15" />
    <ellipse cx="9" cy="37" rx="11" ry="14" />
    <ellipse cx="68" cy="42" rx="11" ry="17" />
    <path d="M36 38c8-3 16 4 21 13 6 7 18 13 17 27-2 14-17 16-26 14-8-2-16-2-25 0C12 94 0 87 2 73c1-10 10-15 17-20 6-5 9-13 17-15z" />
  </svg>
);

const menus = [
  ['编辑(E)', -42, 50], ['图像(I)', 19, 44], ['图层(L)', 19, 47], ['文字(Y)', 19, 48], ['选择(S)', 20, 49],
  ['滤镜(T)', 18, 47], ['3D(D)', 21, 36], ['视图(V)', 18, 49], ['窗口(W)', 20, 54], ['帮助(H)', 19, 50],
];
const hRuler = ['4', '2', '0', '2', '4', '6', '8', '10', '12', '14', '16', '18', '20', '22', '24'];
const vRuler = ['2', '0', '2', '4', '6', '8', '10', '12', '14', '16', '18', '20', '22', '24', '26', '28', '30', '32'];
const effects = ['斜面和浮雕...', '描边...', '内阴影...', '内发光...', '光泽...', '颜色叠加...', '渐变叠加...', '图案叠加...', '外发光...', '投影...'];

const App = () => {
  return (
    <Page>
      <GlobalStyle />
      <MenuBar>
        {menus.map(([label, ml, w]) => (
          <MenuItem key={label} $ml={ml} $w={w}>{label}</MenuItem>
        ))}
        <WinButtons>
          <WinButton /><WinButton /><WinButton $flex={1.500} />
        </WinButtons>
      </MenuBar>

      <OptionsBar>
        <OptLabel $ml={-3} $w={63}>自动选择:</OptLabel>
        <Drop $ml={21} $w={62}>图层<Chevron /></Drop>
        <Sep $ml={12} />
        <Check $ml={10} />
        <OptLabel $ml={9} $w={100}>显示变换控件</OptLabel>
        <Sep $ml={10} />
        <ToolIcon $ml={17}><AlignLeft /></ToolIcon>
        <ToolIcon $ml={16}><AlignCenter /></ToolIcon>
        <ToolIcon $ml={16}><AlignRight /></ToolIcon>
        <ToolIcon $ml={24}><DistH /></ToolIcon>
        <Sep $ml={17} />
        <ToolIcon $ml={17}><AlignTop /></ToolIcon>
        <ToolIcon $ml={15}><AlignMid /></ToolIcon>
        <ToolIcon $ml={16}><AlignBottom /></ToolIcon>
        <ToolIcon $ml={28}><DistV /></ToolIcon>
        <Sep $ml={19} />
        <ToolIcon $ml={17} $color="#d0d0d0"><Dots /></ToolIcon>
        <Sep $ml={16} />
        <OptLabel $ml={11} $w={60} $dim>3D 模式:</OptLabel>
        <ToolIcon $ml={17} $color="#8f8f8f"><Orbit3D /></ToolIcon>
        <ToolIcon $ml={11} $color="#8f8f8f"><Roll3D /></ToolIcon>
        <ToolIcon $ml={12} $color="#8f8f8f"><Pan3D /></ToolIcon>
        <ToolIcon $ml={11} $color="#8f8f8f"><Slide3D /></ToolIcon>
        <ToolIcon $ml={10} $color="#8f8f8f"><Camera3D /></ToolIcon>
        <ToolIcon $ml={581} $color="#d6d6d6"><Search size={20} strokeWidth={2} /></ToolIcon>
        <ToolIcon $ml={17} $color="#d0d0d0"><Workspaces /></ToolIcon>
        <ToolIcon $ml={15} $color="#aaa"><Chevron /></ToolIcon>
        <ToolIcon $ml={13} $color="#d6d6d6"><Share /></ToolIcon>
      </OptionsBar>

      <Workspace>
        <DocWindow>
          <TitleBar>
            <PsBadge>Ps</PsBadge>
            <TitleText>未标题-1 @ 100% (PS, RGB/8) *</TitleText>
            <WinControls>
              <WinControl $w={36} $first><Svg w={13} h={6} vb="0 0 13 6"><rect y="1" width="13" height="5" /></Svg></WinControl>
              <WinControl $w={33}><svg width="13" height="11" viewBox="0 0 13 11" fill="none" stroke="currentColor" strokeWidth="2.400"><rect x="1.200" y="1.200" width="10.600" height="8.600" /></svg></WinControl>
              <WinControl $w={57}><svg width="14" height="12" viewBox="0 0 14 12" fill="none" stroke="currentColor" strokeWidth="2.200"><path d="M1 .5 13 11.500M13 .5 1 11.500" /></svg></WinControl>
            </WinControls>
          </TitleBar>
          <DocInner>
            <RulerTop>
              <Corner />
              <HTicks>
                {hRuler.map((n, i) => (
                  <HCell key={i}>{n}</HCell>
                ))}
              </HTicks>
              <ScrollStrip />
            </RulerTop>
            <MiddleRow>
              <RulerLeft>
                <VLead />
                {vRuler.map((n, i) => (
                  <VCell key={i}>
                    {n.split('').map((d, j) => <span key={j}>{d}</span>)}
                  </VCell>
                ))}
              </RulerLeft>
              <CanvasArea>
                <Artboard>
                  <ArtText viewBox="0 0 490 693">
                    <g fill="#ffe65a" stroke="#ffe65a" strokeWidth="30" strokeLinejoin="round" strokeLinecap="round" fontFamily='"Open Sans", sans-serif' fontWeight="300" fontSize="270">
                      <text transform="matrix(1.100 0.09 0 1 56 398)">P</text>
                      <text transform="matrix(1.050 0.09 0 1 266 422)">S</text>
                    </g>
                  </ArtText>
                </Artboard>
              </CanvasArea>
              <SideStrip />
            </MiddleRow>
            <StatusBar>
              <Zoom>100%</Zoom>
              <DocInfo><span>文档:1.43M/1.91M</span><span>〉</span></DocInfo>
            </StatusBar>
          </DocInner>
        </DocWindow>

        <DockColumn>
          <Strip $pad={9}>››</Strip>
          <DockCell $h={84} $gap={10} $top={1}><Brush /><BrushPresets /></DockCell>
          <DockCell $top={14}><Stamp /></DockCell>
          <DockCell $top={15}><Pilcrow /></DockCell>
          <DockCell $top={11}><Tools /></DockCell>
          <DockCell $top={13}><Copies /></DockCell>
          <DockCell $top={8}><DockLetter $serif>A</DockLetter></DockCell>
          <DockCell $top={7}><DockLetter>A|</DockLetter></DockCell>
        </DockColumn>

        <PanelColumn>
          <Strip $pad={15}>‹‹</Strip>
          <Tabs $h={35}>
            <Tab $w={84}>历史记录</Tab>
            <Tab $w={56}>颜色</Tab>
            <Tab $w={54}>色板</Tab>
            <Tab $w={55} $active>属性</Tab>
            <PanelMenu />
          </Tabs>
          <PropsHeader>
            <TypeBox>T</TypeBox>文字图层属性
          </PropsHeader>
          <PropsBody>
            <PropsContent>
              <PropRow $mt={13} $h={25}>
                <FieldLabel $w={24} $ml={3} $dim>W:</FieldLabel>
                <Field $w={70} $dim>17.33 厘米</Field>
                <IconSlot $w={48} $color="#999"><Link /></IconSlot>
                <FieldLabel $w={23} $ml={1} $dim>H:</FieldLabel>
                <Field $w={70} $dim>16.4 厘米</Field>
              </PropRow>
              <PropRow $mt={13} $h={25}>
                <FieldLabel $w={21} $ml={6}>X:</FieldLabel>
                <Field $w={70}>1.72 厘米</Field>
                <FieldLabel $w={21} $ml={49}>Y:</FieldLabel>
                <Field $w={70}>6.03 厘米</Field>
              </PropRow>
              <PropRow $mt={28} $h={21}>
                <Combo $w={204}>
                  <ComboText $pad={2}>方正粗圆简体</ComboText>
                  <ComboArrow $w={15}><Chevron /></ComboArrow>
                </Combo>
              </PropRow>
              <PropRow $mt={15} $h={19}>
                <Combo $w={204} $dim>
                  <ComboText $pad={8}>-</ComboText>
                  <ComboArrow $w={15} $dim><Chevron /></ComboArrow>
                </Combo>
              </PropRow>
              <PropRow $mt={19} $h={21}>
                <IconSlot $w={21} $ml={-1} $color="#d8d8d8"><SizeIcon /></IconSlot>
                <Combo $w={81} $ml={8}>
                  <ComboText>380.94 点</ComboText>
                  <ComboArrow $w={17}><Chevron /></ComboArrow>
                </Combo>
                <IconSlot $w={23} $ml={21} $color="#d8d8d8"><KerningIcon /></IconSlot>
                <Combo $w={80} $ml={7}>
                  <ComboText>100</ComboText>
                  <ComboArrow $w={18}><Chevron /></ComboArrow>
                </Combo>
              </PropRow>
              <PropRow $mt={18} $h={20}>
                <IconSlot $w={21} $ml={-1} $color="#d8d8d8"><LeadingIcon /></IconSlot>
                <Combo $w={81} $ml={8}>
                  <ComboText>588.97 点</ComboText>
                  <ComboArrow $w={17}><Chevron /></ComboArrow>
                </Combo>
              </PropRow>
              <PropRow $mt={15} $h={17}>
                <AlignBtn $w={17} $ml={7}><TextLeft /></AlignBtn>
                <AlignBtn $w={29} $ml={9} $active><TextMid /></AlignBtn>
                <AlignBtn $w={17} $ml={9}><TextRight /></AlignBtn>
                <Swatch />
              </PropRow>
            </PropsContent>
            <ScrollTrack />
          </PropsBody>

          <Tabs $h={34}>
            <Tab $w={44}>3D</Tab>
            <Tab $w={53} $active>图层</Tab>
            <Tab $w={56}>通道</Tab>
            <Tab $w={55}>路径</Tab>
            <PanelMenu />
          </Tabs>
          <LayersPanel>
            <FilterRow>
              <LayerDrop $w={103}><MagSmall /><span>类型</span><Chevron /></LayerDrop>
              <IconSlot $w={15} $ml={22}><ImageFilter /></IconSlot>
              <IconSlot $w={14} $ml={15}><AdjustFilter /></IconSlot>
              <IconSlot $w={14} $ml={15} $color="#d8d8d8"><svg width="14" height="14" viewBox="0 0 14 14" fill="currentColor"><path d="M0 0h14v4h-1L12 2H8.500v10H10v2H4v-2h1.500V2H2L1 4H0z" /></svg></IconSlot>
              <IconSlot $w={15} $ml={15}><ShapeFilter /></IconSlot>
              <IconSlot $w={14} $ml={16}><SmartFilter /></IconSlot>
              <ToggleKnob />
            </FilterRow>
            <BlendRow $h={36} $top={4}>
              <LayerDrop $w={143} $pad={10}><span>正常</span><Chevron /></LayerDrop>
              <Muted $w={68} $ml={10}>不透明度:</Muted>
              <PercentBox $ml={2}><PercentValue>100%</PercentValue><PercentArrow><Chevron /></PercentArrow></PercentBox>
            </BlendRow>
            <BlendRow $h={39} $pad={10} $bot={3} $flat>
              <Muted $w={40}>锁定:</Muted>
              <IconSlot $w={14} $ml={6}><Checker /></IconSlot>
              <IconSlot $w={16} $ml={13}><LockBrush /></IconSlot>
              <IconSlot $w={16} $ml={10}><Move size={17} strokeWidth={2} /></IconSlot>
              <IconSlot $w={17} $ml={11}><CropLock /></IconSlot>
              <IconSlot $w={14} $ml={12}><LockFill /></IconSlot>
              <Muted $w={36} $ml={11}>填充:</Muted>
              <PercentBox $ml={4}><PercentValue>100%</PercentValue><PercentArrow><Chevron /></PercentArrow></PercentBox>
            </BlendRow>
            <LayerRow $h={50}>
              <EyeCol><EyeIcon /></EyeCol>
              <LayerBody $selected>
                <TypeThumb><TypeFrame /></TypeThumb>
                <LayerName>PS</LayerName>
              </LayerBody>
            </LayerRow>
            <LayerRow $h={51}>
              <EyeCol><EyeIcon /></EyeCol>
              <LayerBody>
                <BlueThumb />
                <LayerName>背景</LayerName>
                <LockSlot><LockLine /></LockSlot>
              </LayerBody>
            </LayerRow>
            <LayerSpacer />
            <LayerActions>
              <ActionBox><LinkAct /></ActionBox>
              <ActionBox>fx</ActionBox>
              <ActionBox><MaskAct /></ActionBox>
              <ActionBox><AdjAct /></ActionBox>
              <ActionBox><FolderAct /></ActionBox>
              <ActionBox><NewAct /></ActionBox>
              <ActionBox><Trash2 size={16} strokeWidth={1.500} /></ActionBox>
            </LayerActions>
            <BottomGrip />
          </LayersPanel>

          <StyleMenu>
            <StyleItem>混合选项...</StyleItem>
            <StyleDivider />
            {effects.map((name) => (
              <StyleItem key={name} $active={name === '描边...'}>{name}</StyleItem>
            ))}
          </StyleMenu>
        </PanelColumn>
      </Workspace>

      <Watermark>
        <MarkTop>
          <MarkBaiBox><MarkBai>Bai</MarkBai></MarkBaiBox>
          <Paw>
            <PawArt />
            <MarkDu>du</MarkDu>
          </Paw>
          <MarkCn>经验</MarkCn>
        </MarkTop>
        <MarkDomain>jingyan.baidu.com</MarkDomain>
      </Watermark>
    </Page>
  );
};

export default App;
